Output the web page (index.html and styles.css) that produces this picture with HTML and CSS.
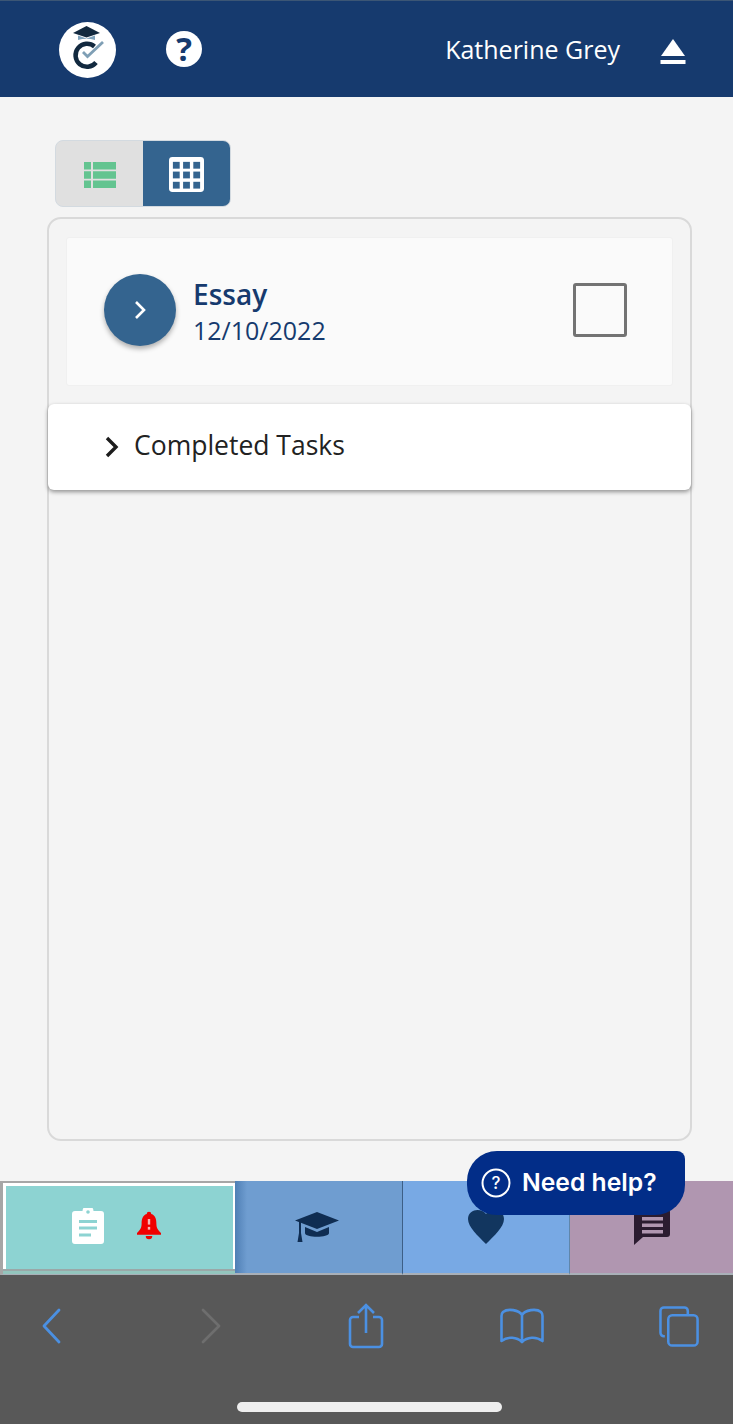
FILE: index.html
```html
<!DOCTYPE html>
<html lang="en">
<head>
    <meta charset="UTF-8">
    <meta name="viewport" content="width=device-width, initial-scale=1.0">
    <title>Tasks</title>
    <link rel="stylesheet" href="styles.css">
</head>
<body>
    <div class="page">
        <header class="topbar">
            <div class="logo">
                <svg width="57" height="56" viewBox="0 0 57 56">
                    <path d="M14 11 L27.500 4 L41 11 L27.500 15.500 Z" fill="#12293f"/>
                    <path d="M19 13.500 L27.500 16.500 L36 13.500 L36 18 Q27.500 15.500 19 18 Z" fill="#7fa3bd"/>
                    <path d="M35.500 24.500 A11.500 11.500 0 1 0 37 40.500" fill="none" stroke="#12293f" stroke-width="4.500"/>
                    <path d="M24 30 L28.500 34.500 L44 20" fill="none" stroke="#7f9fb5" stroke-width="2.800"/>
                </svg>
            </div>
            <div class="help-dot">?</div>
            <div class="user-name">Katherine Grey</div>
            <svg class="eject" width="26" height="25" viewBox="0 0 26 25">
                <path d="M13 0 L25 17 L1 17 Z" fill="#fff"/>
                <rect x="0.500" y="21" width="25" height="4" fill="#fff"/>
            </svg>
        </header>

        <main class="content">
            <div class="view-toggle">
                <div class="toggle-btn">
                    <svg width="32" height="26" viewBox="0 0 32 26">
                        <path d="M0 0h7v7.500H0zM9 0h23v7.500H9zM0 9.300h7v7.400H0zM9 9.300h23v7.400H9zM0 18.500h7V26H0zM9 18.500h23V26H9z" fill="#63c490"/>
                    </svg>
                </div>
                <div class="toggle-btn active">
                    <svg width="35" height="35" viewBox="0 0 36 36">
                        <rect width="36" height="36" rx="3.500" fill="#fff"/>
                        <g fill="#34648f">
                            <rect x="4" y="5" width="7" height="7"/><rect x="14.500" y="5" width="7" height="7"/><rect x="25" y="5" width="7" height="7"/>
                            <rect x="4" y="15" width="7" height="7"/><rect x="14.500" y="15" width="7" height="7"/><rect x="25" y="15" width="7" height="7"/>
                            <rect x="4" y="25.500" width="7" height="7"/><rect x="14.500" y="25.500" width="7" height="7"/><rect x="25" y="25.500" width="7" height="7"/>
                        </g>
                    </svg>
                </div>
            </div>

            <section class="panel">
                <div class="task-card">
                    <div class="task-open">
                        <svg width="14" height="20" viewBox="0 0 14 20">
                            <path d="M3 2 L11 10 L3 18" fill="none" stroke="#fff" stroke-width="2.600"/>
                        </svg>
                    </div>
                    <div class="task-info">
                        <div class="task-title">Essay</div>
                        <div class="task-date">12/10/2022</div>
                    </div>
                    <div class="task-check"></div>
                </div>
                <div class="completed-row">
                    <svg width="16" height="22" viewBox="0 0 16 22">
                        <path d="M3 2 L12 11 L3 20" fill="none" stroke="#1c1c1c" stroke-width="3.400"/>
                    </svg>
                    <span class="completed-label">Completed Tasks</span>
                </div>
            </section>
        </main>

        <nav class="tabs">
            <div class="tab tab-tasks">
                <svg width="32" height="36" viewBox="0 0 32 36">
                    <path d="M3 3h7.500a5.500 5.500 0 0 1 11 0H29a3 3 0 0 1 3 3v27a3 3 0 0 1-3 3H3a3 3 0 0 1-3-3V6a3 3 0 0 1 3-3z" fill="#fff"/>
                    <circle cx="16" cy="4" r="1.800" fill="#8dd3d2"/>
                    <rect x="7" y="12" width="18" height="3" fill="#8dd3d2"/>
                    <rect x="7" y="18.500" width="18" height="3" fill="#8dd3d2"/>
                    <rect x="7" y="25.500" width="12" height="3" fill="#8dd3d2"/>
                </svg>
                <svg width="24" height="29" viewBox="0 0 26 30">
                    <path d="M13 0a2.500 2.500 0 0 1 2.500 2.500C20 4 21 8 21 13c0 5 2 7 5 10v2H0v-2c3-3 5-5 5-10 0-5 1-9 5.500-10.500A2.500 2.500 0 0 1 13 0z" fill="#f00000"/>
                    <path d="M9.500 26.500h7a3.500 3.500 0 0 1-7 0z" fill="#f00000"/>
                    <rect x="11.700" y="8" width="2.600" height="6" fill="#f7b5b5"/>
                    <rect x="11.700" y="16.500" width="2.600" height="3" fill="#f7b5b5"/>
                </svg>
            </div>
            <div class="tab tab-school">
                <svg width="44" height="30" viewBox="0 0 44 30">
                    <path d="M22 0 L44 8.500 L22 17 L0 8.500 Z" fill="#0f2d52"/>
                    <path d="M10 15 L22 20 L34 15 V21 C34 26 10 26 10 21 Z" fill="#0f2d52"/>
                    <path d="M4 10 H6 V21 L7.500 30 H2.500 L4 21 Z" fill="#0f2d52"/>
                </svg>
            </div>
            <div class="tab tab-heart">
                <svg width="36" height="34" viewBox="0 0 36 34">
                    <path d="M18 34 C10 26 0 17 0 9 C0 3 5 0 9.500 0 C13 0 16 1.500 18 4 C20 1.500 23 0 26.500 0 C31 0 36 3 36 9 C36 17 26 26 18 34 Z" fill="#12365f"/>
                </svg>
            </div>
            <div class="tab tab-chat">
                <svg width="36" height="36" viewBox="0 0 36 36">
                    <path d="M3 0h30a3 3 0 0 1 3 3v22a3 3 0 0 1-3 3H9l-9 8V3a3 3 0 0 1 3-3z" fill="#2b1c30"/>
                    <rect x="8" y="8" width="21" height="3.500" fill="#b096b0"/>
                    <rect x="8" y="14.500" width="21" height="3.500" fill="#b096b0"/>
                    <rect x="8" y="21" width="21" height="3.500" fill="#b096b0"/>
                </svg>
            </div>
        </nav>

        <div class="need-help">
            <svg width="30" height="30" viewBox="0 0 30 30">
                <circle cx="15" cy="15" r="13.500" fill="none" stroke="#fff" stroke-width="2"/>
                <text x="15" y="21" text-anchor="middle" class="need-help-mark">?</text>
            </svg>
            <span class="need-help-label">Need help?</span>
        </div>

        <footer class="browser-bar">
            <div class="browser-icons">
                <svg class="ic-back" width="24" height="36" viewBox="0 0 24 36">
                    <path d="M19 2 L4 18 L19 34" fill="none" stroke="#4b90e2" stroke-width="2.800" stroke-linecap="round" stroke-linejoin="round"/>
                </svg>
                <svg class="ic-forward" width="24" height="36" viewBox="0 0 24 36">
                    <path d="M4 2 L20 18 L4 34" fill="none" stroke="#6e6e6e" stroke-width="2.800" stroke-linecap="round" stroke-linejoin="round"/>
                </svg>
                <svg class="ic-share" width="36" height="46" viewBox="0 0 36 46">
                    <path d="M11 14 H5 a3 3 0 0 0 -3 3 V41 a3 3 0 0 0 3 3 H31 a3 3 0 0 0 3 -3 V17 a3 3 0 0 0 -3 -3 H25" fill="none" stroke="#4b90e2" stroke-width="2.600"/>
                    <path d="M18 30 V2 M10 10 L18 2 L26 10" fill="none" stroke="#4b90e2" stroke-width="2.600"/>
                </svg>
                <svg class="ic-book" width="44" height="36" viewBox="0 0 44 36">
                    <path d="M22 7 C19 2 8 0 3 4 Q1.500 5.500 1.500 8 V33 C8 28 17 29 22 34 C27 29 36 28 42.500 33 V8 Q42.500 5.500 41 4 C36 0 25 2 22 7 Z M22 7 V34" fill="none" stroke="#4b90e2" stroke-width="2.600" stroke-linejoin="round"/>
                </svg>
                <svg class="ic-tabs" width="41" height="41" viewBox="0 0 42 42">
                    <path d="M6 31 H5 a3.500 3.500 0 0 1 -3.500 -3.500 V5 A3.500 3.500 0 0 1 5 1.500 H26 A3.500 3.500 0 0 1 29.500 5 V9" fill="none" stroke="#4b90e2" stroke-width="2.600"/>
                    <rect x="9.500" y="9.500" width="30" height="31" rx="4" fill="none" stroke="#4b90e2" stroke-width="2.600"/>
                </svg>
            </div>
            <div class="home-indicator"></div>
        </footer>
    </div>
</body>
</html>
```

FILE: styles.css
```css
* {
    box-sizing: border-box;
}

body {
    margin: 0;
    font-family: "Open Sans", sans-serif;
    background-color: #f4f4f4;
}

.page {
    position: relative;
    width: 733px;
    height: 1424px;
    display: flex;
    flex-direction: column;
    overflow: hidden;
}

/* top bar */
.topbar {
    height: 97px;
    flex-shrink: 0;
    display: flex;
    align-items: center;
    padding-left: 59px;
    padding-right: 47px;
    background-color: #163a6e;
    border-top: 1px solid #3c5675;
}

.logo {
    width: 57px;
    height: 56px;
    border-radius: 50%;
    background-color: #fff;
    display: flex;
    justify-content: center;
    align-items: center;
    margin-top: 2px;
}

.help-dot {
    width: 36px;
    height: 36px;
    margin-left: 50px;
    border-radius: 50%;
    background-color: #fff;
    color: #163a6e;
    font-size: 33px;
    font-weight: 700;
    line-height: 36px;
    text-align: center;
}

.user-name {
    margin-left: auto;
    margin-right: 40px;
    color: #fff;
    font-size: 25px;
}

.eject {
    display: block;
    margin-top: 4px;
}

/* main area */
.content {
    flex: 1;
    padding: 43px 41px 40px 47px;
    display: flex;
    flex-direction: column;
}

.view-toggle {
    width: 176px;
    height: 67px;
    margin-left: 8px;
    margin-bottom: 10px;
    display: flex;
    flex-shrink: 0;
    border: 1px solid #d3dae0;
    border-radius: 8px;
    overflow: hidden;
    background-color: #e0e0e0;
}

.toggle-btn {
    width: 87px;
    padding-top: 2px;
    display: flex;
    justify-content: center;
    align-items: center;
}

.toggle-btn.active {
    flex: 1;
    background-color: #34648f;
}

.panel {
    flex: 1;
    border: 2px solid #d9d9d9;
    border-radius: 14px;
    padding-top: 18px;
}

.task-card {
    height: 149px;
    margin: 0 17px 18px;
    padding: 0 45px 4px 37px;
    display: flex;
    align-items: center;
    background-color: #fafafa;
    border: 1px solid #f0f0f0;
    border-radius: 3px;
}

.task-open {
    width: 72px;
    height: 72px;
    border-radius: 50%;
    background-color: #34648f;
    box-shadow: 0 3px 5px rgba(0, 0, 0, 0.3);
    display: flex;
    justify-content: center;
    align-items: center;
}

.task-info {
    margin-top: 4px;
    margin-left: 17px;
    color: #163a6e;
}

.task-title {
    font-size: 28px;
    font-weight: 600;
    line-height: 37px;
}

.task-date {
    font-size: 25px;
    line-height: 34px;
}

.task-check {
    width: 54px;
    height: 54px;
    margin-left: auto;
    border: 3px solid #737373;
    border-radius: 3px;
}

.completed-row {
    height: 86px;
    margin: 0 -1px;
    padding-left: 56px;
    display: flex;
    align-items: center;
    gap: 14px;
    background-color: #fff;
    border-radius: 6px;
    box-shadow: 0 2px 4px rgba(0, 0, 0, 0.4);
    color: #222;
    font-size: 26.5px;
}

.completed-label {
    margin-bottom: 4px;
}

/* bottom tabs */
.tabs {
    height: 94px;
    flex-shrink: 0;
    display: flex;
}

.tab {
    display: flex;
    justify-content: center;
    align-items: center;
    border-bottom: 2px solid #a9b0b8;
}

.tab-tasks {
    width: 235px;
    gap: 33px;
    padding: 0 5px 6px 0;
    background-color: #8dd3d2;
    border-top: 2px solid #a6a6a6;
    border-left: 3px solid #a6a6a6;
    border-bottom-width: 1px;
    box-shadow: inset 0 -3px 0 #93c5bd, inset 0 -5px 0 #9aa8a8, inset 3px 3px 0 #fff, inset -2px 0 0 #fff;
}

.tab-school {
    width: 168px;
    padding-right: 3px;
    background: linear-gradient(90deg, #4f7fb5 0, #6f9dd0 12px, #6f9dd0 100%);
    border-right: 1px solid #3d5f86;
}

.tab-heart {
    width: 167px;
    background-color: #78a9e4;
    border-right: 1px solid #5f86ab;
}

.tab-chat {
    flex: 1;
    background-color: #b096b0;
}

.need-help {
    position: absolute;
    left: 467px;
    top: 1151px;
    width: 218px;
    height: 64px;
    padding-left: 14px;
    display: flex;
    align-items: center;
    gap: 11px;
    background-color: #022d88;
    border-radius: 30px 8px 30px 30px;
    color: #fff;
    font-family: Inter, sans-serif;
    font-size: 24.7px;
    font-weight: 600;
}

.need-help-label {
    margin-bottom: 3px;
}

.need-help-mark {
    fill: #fff;
    font-family: Inter, sans-serif;
    font-size: 17px;
    font-weight: 500;
}

/* browser chrome */
.browser-bar {
    height: 149px;
    flex-shrink: 0;
    background-color: #585858;
    position: relative;
}

.browser-icons {
    display: flex;
    align-items: center;
    height: 74px;
    padding-top: 28px;
}

.ic-back {
    margin-left: 40px;
}

.ic-forward {
    margin-left: 135px;
}

.ic-share {
    margin-left: 125px;
}

.ic-book {
    margin-left: 116px;
}

.ic-tabs {
    margin-left: 115px;
}

.home-indicator {
    position: absolute;
    left: 237px;
    bottom: 12px;
    width: 265px;
    height: 10px;
    border-radius: 5px;
    background-color: #eee;
}
```
